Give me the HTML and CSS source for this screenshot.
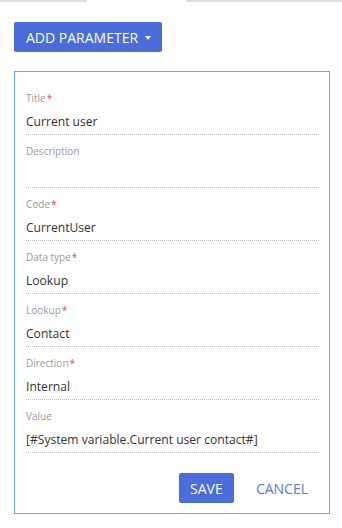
FILE: index.html
```html
<!DOCTYPE html>
<html>
<head>
<meta charset="utf-8">
<link rel="stylesheet" href="styles.css">
</head>
<body>
<div class="tabs">
  <div class="tab-line"></div>
  <div class="tab-gap"></div>
  <div class="tab-line"></div>
</div>
<div class="page">
  <button class="btn btn-primary add-btn">ADD PARAMETER <span class="caret"></span></button>
  <div class="card">
    <div class="field">
      <div class="label">Title<span class="req">*</span></div>
      <div class="value">Current user</div>
    </div>
    <div class="field">
      <div class="label">Description</div>
      <div class="value"></div>
    </div>
    <div class="field">
      <div class="label">Code<span class="req">*</span></div>
      <div class="value">CurrentUser</div>
    </div>
    <div class="field">
      <div class="label">Data type<span class="req">*</span></div>
      <div class="value">Lookup</div>
    </div>
    <div class="field">
      <div class="label">Lookup<span class="req">*</span></div>
      <div class="value">Contact</div>
    </div>
    <div class="field">
      <div class="label">Direction<span class="req">*</span></div>
      <div class="value">Internal</div>
    </div>
    <div class="field">
      <div class="label">Value</div>
      <div class="value">[#System variable.Current user contact#]</div>
    </div>
    <div class="actions">
      <button class="btn btn-primary save-btn">SAVE</button>
      <button class="btn btn-link">CANCEL</button>
    </div>
  </div>
</div>
</body>
</html>
```
FILE: styles.css
```css
* { box-sizing: border-box; }
html, body { margin: 0; padding: 0; background: #fff; }
body {
  font-family: "Open Sans", "Noto Sans", sans-serif;
  color: #444;
  width: 342px;
}
.tabs {
  display: flex;
  height: 2px;
}
.tab-line {
  height: 2px;
  background: #dcdcdc;
}
.tab-line:first-child { width: 87px; }
.tab-gap { width: 99px; }
.tab-line:last-child { flex: 1; }
.page {
  padding: 20px 12px 0 14px;
}
.btn {
  font-family: inherit;
  border: none;
  cursor: pointer;
  background: none;
  padding: 0;
}
.btn-primary {
  background: #4a6ddb;
  color: #fff;
  border-radius: 2px;
}
.add-btn {
  height: 30px;
  width: 148px;
  font-size: 14px;
  text-align: left;
  padding-left: 12px;
  display: flex;
  align-items: center;
}
.caret {
  display: inline-block;
  width: 0;
  height: 0;
  border-left: 3.5px solid transparent;
  border-right: 3.5px solid transparent;
  border-top: 4px solid #fff;
  margin-left: 7px;
  margin-top: 1px;
}
.card {
  margin-top: 19px;
  border: 1px solid #5fa8e8;
  padding: 10px 10px 10px 11px;
  width: 316px;
}
.field {
  padding-top: 8px;
  border-bottom: 1px dotted #bcbcbc;
}
.label {
  font-size: 10px;
  line-height: 16px;
  color: #9a9a9a;
}
.req {
  color: #e2493f;
  margin-left: 1px;
}
.value {
  margin-top: 4px;
  font-size: 12.1px;
  line-height: 24px;
  height: 24px;
  color: #333;
}
.actions {
  margin-top: 20px;
  display: flex;
  justify-content: flex-end;
  align-items: center;
  padding-right: 11px;
}
.save-btn {
  width: 55px;
  height: 30px;
  font-size: 14px;
}
.btn-link {
  color: #5a78e0;
  font-size: 14px;
  margin-left: 22px;
}
```
